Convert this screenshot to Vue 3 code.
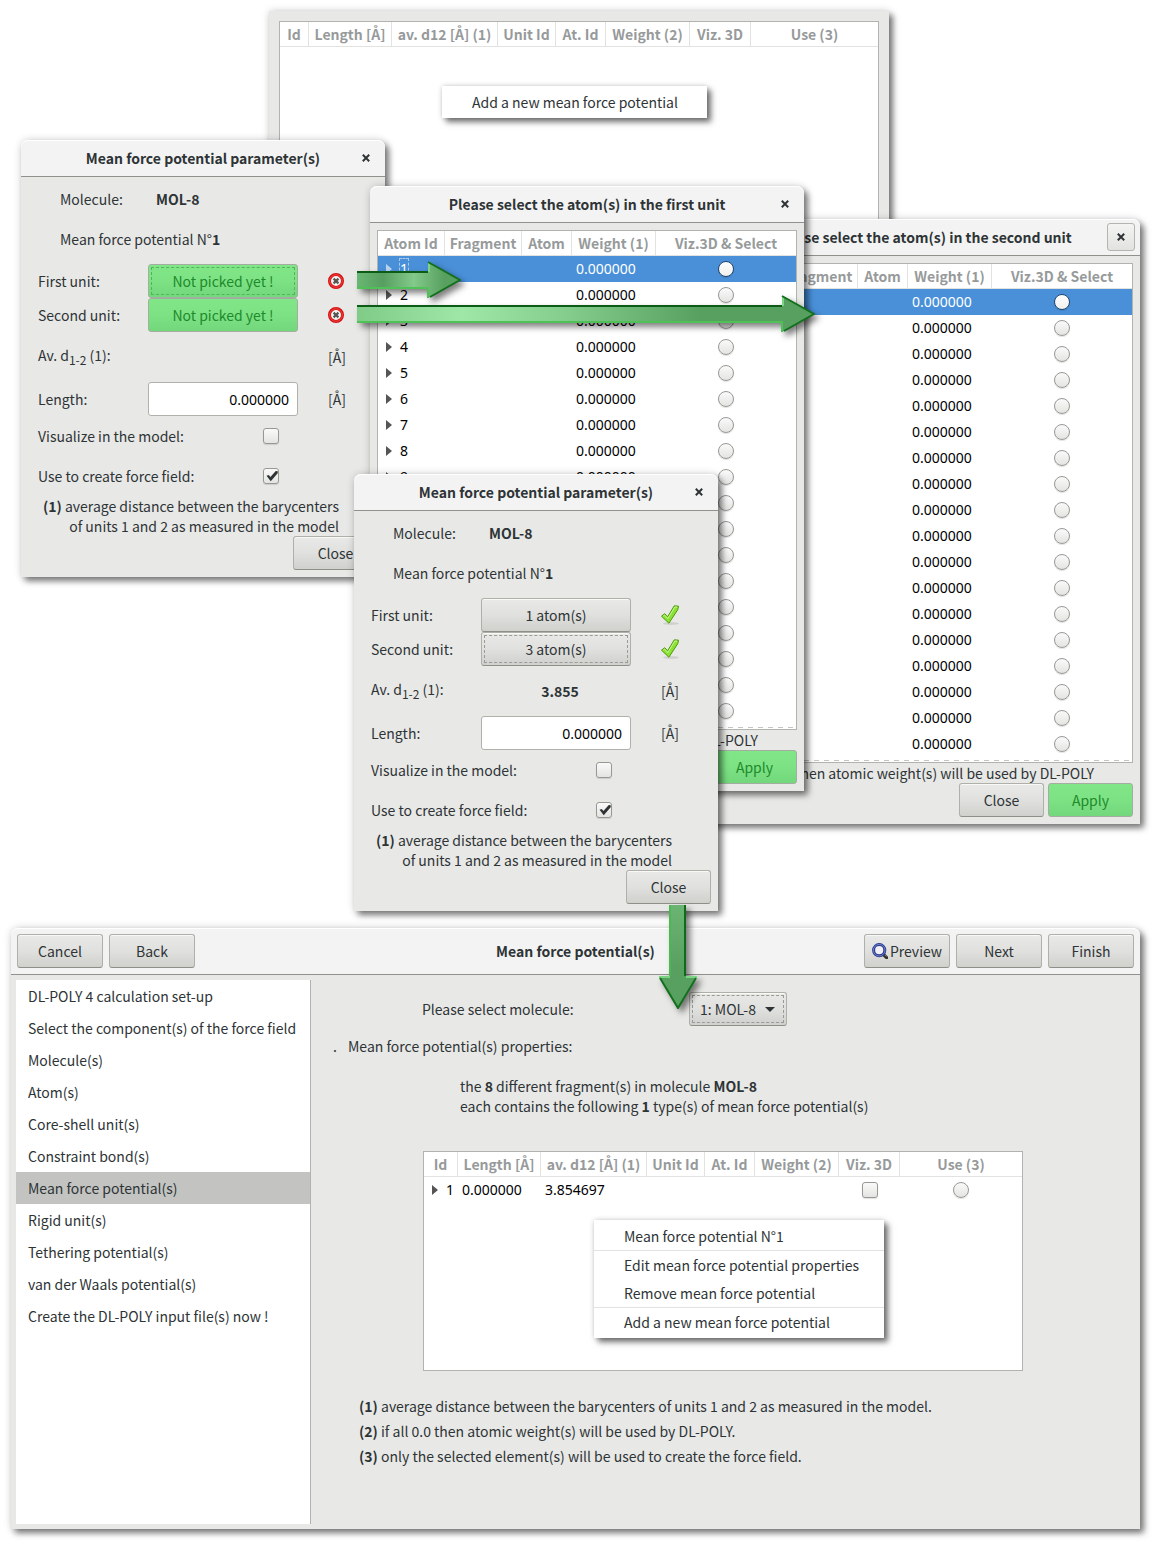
<script setup>
const paramDialogs = [
  { id: 'empty', units: ['Not picked yet !', 'Not picked yet !'], picked: false, focus: 0, distance: '' },
  { id: 'done', units: ['1 atom(s)', '3 atom(s)'], picked: true, focus: 1, distance: '3.855' },
]

const atomDialogs = [
  { id: 'second', unit: 'second', closeFramed: true },
  { id: 'first', unit: 'first', closeFramed: false },
]

const unitLabels = ['First unit:', 'Second unit:']
const atoms = Array.from({ length: 18 }, (_, i) => i + 1)
const atomColumns = ['Atom Id', 'Fragment', 'Atom', 'Weight (1)', 'Viz.3D & Select']
const potentialColumns = ['Id', 'Length [Å]', 'av. d12 [Å] (1)', 'Unit Id', 'At. Id', 'Weight (2)', 'Viz. 3D', 'Use (3)']

const steps = [
  'DL-POLY 4 calculation set-up',
  'Select the component(s) of the force field',
  'Molecule(s)',
  'Atom(s)',
  'Core-shell unit(s)',
  'Constraint bond(s)',
  'Mean force potential(s)',
  'Rigid unit(s)',
  'Tethering potential(s)',
  'van der Waals potential(s)',
  'Create the DL-POLY input file(s) now !',
]
const currentStep = 6

const notes = [
  'average distance between the barycenters of units 1 and 2 as measured in the model.',
  'if all 0.0 then atomic weight(s) will be used by DL-POLY.',
  'only the selected element(s) will be used to create the force field.',
]
</script>

<template>
  <main class="page">
    <div class="desk">
      <section class="window overview" aria-label="Mean force potentials">
        <div class="frame overview-frame">
          <table class="grid potentials">
            <colgroup>
              <col class="c-id-s"><col class="c-len"><col class="c-av"><col class="c-unit"><col class="c-at"><col class="c-weight"><col class="c-viz"><col>
            </colgroup>
            <thead>
              <tr><th v-for="c in potentialColumns" :key="c" scope="col">{{ c }}</th></tr>
            </thead>
          </table>
          <ul class="menu menu-add">
            <li><button type="button">Add a new mean force potential</button></li>
          </ul>
        </div>
      </section>

      <section v-for="d in atomDialogs" :key="d.id" class="window atoms-dialog" :class="'at-' + d.id">
        <header class="titlebar">
          <h2>Please select the atom(s) in the {{ d.unit }} unit</h2>
          <button type="button" class="x" :class="{ framed: d.closeFramed }" aria-label="Close window">
            <svg viewBox="0 0 10 10" width="10" height="10"><path d="M1.8 1.8 8.2 8.2M8.2 1.8 1.8 8.2" /></svg>
          </button>
        </header>
        <div class="atoms-body">
          <div class="frame atoms-frame">
            <table class="grid">
              <colgroup><col class="c-atomid"><col class="c-frag"><col class="c-atom"><col class="c-w"><col></colgroup>
              <thead>
                <tr><th v-for="c in atomColumns" :key="c" scope="col">{{ c }}</th></tr>
              </thead>
              <tbody>
                <tr v-for="n in atoms" :key="n" :class="{ selected: n === 1 }">
                  <td>
                    <span class="tree">
                      <button type="button" class="expander" :aria-label="'Expand atom ' + n">
                        <svg viewBox="0 0 6 10" width="6" height="10"><path d="M0 0 6 5 0 10z" /></svg>
                      </button>
                      <span :class="{ cursor: n === 1 }">{{ n }}</span>
                    </span>
                  </td>
                  <td></td>
                  <td></td>
                  <td>0.000000</td>
                  <td class="mid"><input type="radio" class="radio" :aria-label="'Select atom ' + n"></td>
                </tr>
              </tbody>
            </table>
          </div>
          <p class="atoms-note"><b>(1)</b> if all 0.0 then atomic weight(s) will be used by DL-POLY</p>
          <div class="actions">
            <button type="button" class="btn">Close</button>
            <button type="button" class="btn green">Apply</button>
          </div>
        </div>
      </section>

      <section v-for="d in paramDialogs" :key="d.id" class="window param-dialog" :class="'at-' + d.id">
        <header class="titlebar">
          <h2>Mean force potential parameter(s)</h2>
          <button type="button" class="x" aria-label="Close window">
            <svg viewBox="0 0 10 10" width="10" height="10"><path d="M1.8 1.8 8.2 8.2M8.2 1.8 1.8 8.2" /></svg>
          </button>
        </header>
        <div class="param-body">
          <p class="param-head"><span class="mol">Molecule:</span><b>MOL-8</b></p>
          <p class="param-head">Mean force potential N°<b>1</b></p>
          <div class="units">
            <div v-for="(u, i) in d.units" :key="i" class="row unit">
              <span class="lab">{{ unitLabels[i] }}</span>
              <button type="button" class="btn" :class="{ green: !d.picked, focused: d.focus === i }">{{ u }}</button>
              <svg v-if="d.picked" class="state" viewBox="0 0 22 22" width="22" height="22" aria-label="Picked">
                <ellipse cx="12" cy="19.500" rx="8" ry="1.500" fill="#000" opacity=".1" />
                <path d="M2.500 12.200 5.700 9.700 8.600 12.800 15.300 1.800 19.500 2.200 18.800 5.600 9.900 19.200z" fill="#8ae234" stroke="#4e9a06" stroke-linejoin="round" />
                <path d="M4.200 12.200 5.600 11.100 8.700 14.600 15.900 3 18.200 3.200" fill="none" stroke="#c9f59b" />
              </svg>
              <svg v-else class="state bad" viewBox="0 0 16 16" width="16" height="16" aria-label="Not picked">
                <circle cx="8" cy="8" r="6.500" fill="#f4f4f2" stroke="#d40f0f" stroke-width="3" />
                <circle cx="8" cy="8" r="6.300" fill="none" stroke="#f04a4a" />
                <path d="M5.600 5.600 10.400 10.400M10.400 5.600 5.600 10.400" stroke="#555753" stroke-width="2.200" />
              </svg>
            </div>
          </div>
          <div class="row av">
            <span class="lab">Av. d<sub>1-2</sub> (1):</span>
            <b class="distance">{{ d.distance }}</b>
            <span class="ang">[Å]</span>
          </div>
          <div class="row length">
            <label class="lab" :for="'len-' + d.id">Length:</label>
            <input :id="'len-' + d.id" type="text" class="entry" value="0.000000">
            <span class="ang">[Å]</span>
          </div>
          <div class="row tick">
            <label :for="'vis-' + d.id">Visualize in the model:</label>
            <input :id="'vis-' + d.id" type="checkbox" class="check">
          </div>
          <div class="row tick">
            <label :for="'use-' + d.id">Use to create force field:</label>
            <input :id="'use-' + d.id" type="checkbox" class="check" checked>
          </div>
          <p class="param-note"><b>(1)</b> average distance between the barycenters<br>of units 1 and 2 as measured in the model</p>
          <div class="actions"><button type="button" class="btn">Close</button></div>
        </div>
      </section>
    </div>

    <section class="window wizard">
      <header class="wizard-bar">
        <div class="group">
          <button type="button" class="btn">Cancel</button>
          <button type="button" class="btn">Back</button>
        </div>
        <h1>Mean force potential(s)</h1>
        <div class="group end">
          <button type="button" class="btn preview">
            <svg viewBox="0 0 16 16" width="16" height="16">
              <path d="M12 12 14.600 14.600" stroke="#2e2e2e" stroke-width="3.200" stroke-linecap="round" />
              <path d="M12.800 12 14.400 13.600" stroke="#a08a5a" />
              <circle cx="7.200" cy="7.200" r="5.600" fill="#f0f0f4" stroke="#2b3a8c" stroke-width="3" />
              <circle cx="7.200" cy="7.200" r="5.800" fill="none" stroke="#6f83d0" />
            </svg>Preview
          </button>
          <button type="button" class="btn">Next</button>
          <button type="button" class="btn">Finish</button>
        </div>
      </header>
      <div class="wizard-body">
        <nav class="steps" aria-label="Steps">
          <a v-for="(s, i) in steps" :key="s" href="#" :class="{ current: i === currentStep }">{{ s }}</a>
        </nav>
        <div class="content">
          <div class="pick">
            <label for="molecule">Please select molecule:</label>
            <span class="combo">
              <select id="molecule" class="btn focused"><option>1: MOL-8</option></select>
              <svg viewBox="0 0 10 5" width="10" height="5"><path d="M0 0H10L5 5z" fill="#2e3436" /></svg>
            </span>
          </div>
          <p class="props"><span class="dot">.</span>Mean force potential(s) properties:</p>
          <p class="summary">the <b>8</b> different fragment(s) in molecule <b>MOL-8</b><br>each contains the following <b>1</b> type(s) of mean force potential(s)</p>
          <div class="frame result-frame">
            <table class="grid potentials">
              <colgroup>
                <col class="c-id"><col class="c-len"><col class="c-av"><col class="c-unit"><col class="c-at"><col class="c-weight"><col class="c-viz"><col>
              </colgroup>
              <thead>
                <tr><th v-for="c in potentialColumns" :key="c" scope="col">{{ c }}</th></tr>
              </thead>
              <tbody>
                <tr>
                  <td>
                    <span class="tree">
                      <button type="button" class="expander" aria-label="Expand potential 1">
                        <svg viewBox="0 0 6 10" width="6" height="10"><path d="M0 0 6 5 0 10z" /></svg>
                      </button>
                      <span>1</span>
                    </span>
                  </td>
                  <td>0.000000</td>
                  <td>3.854697</td>
                  <td></td>
                  <td></td>
                  <td></td>
                  <td class="mid"><input type="checkbox" class="check" aria-label="Visualize potential 1"></td>
                  <td class="mid"><input type="radio" class="radio" aria-label="Use potential 1"></td>
                </tr>
              </tbody>
            </table>
            <ul class="menu menu-edit">
              <li><button type="button">Mean force potential N°1</button></li>
              <li class="sep"><button type="button">Edit mean force potential properties</button></li>
              <li><button type="button">Remove mean force potential</button></li>
              <li class="sep"><button type="button">Add a new mean force potential</button></li>
            </ul>
          </div>
          <div class="notes">
            <p v-for="(n, i) in notes" :key="i"><b>({{ i + 1 }})</b> {{ n }}</p>
          </div>
        </div>
      </div>
    </section>

    <svg class="arrow to-first" viewBox="0 0 104 38" width="104" height="38" aria-hidden="true">
      <defs>
        <linearGradient id="g1"><stop offset="0" stop-color="#69b773" /><stop offset=".25" stop-color="#579f60" /><stop offset=".55" stop-color="#82c98a" /><stop offset=".85" stop-color="#58a060" /></linearGradient>
      </defs>
      <path d="M0 11H71V1L103 19 71 37V27H0z" fill="url(#g1)" />
      <path d="M71 37V27H0" fill="none" stroke="#4fc257" stroke-width="2" />
      <path d="M0 11H71" stroke="#0d5c16" stroke-width="2" />
      <path d="M72 2V11" stroke="#7bd583" stroke-width="2" />
      <path d="M71 1 103 19 73 36" fill="none" stroke="#12701c" stroke-width="2" />
    </svg>
    <svg class="arrow to-second" viewBox="0 0 458 38" width="458" height="38" aria-hidden="true">
      <defs>
        <linearGradient id="g2"><stop offset="0" stop-color="#80cb88" /><stop offset=".23" stop-color="#9fe7a7" /><stop offset=".45" stop-color="#86ce8e" /><stop offset=".75" stop-color="#58a060" /></linearGradient>
      </defs>
      <path d="M0 11H425V1L457 19 425 37V27H0z" fill="url(#g2)" />
      <path d="M425 37V27H0" fill="none" stroke="#4fc257" stroke-width="2" />
      <path d="M0 11H425" stroke="#0d5c16" stroke-width="2" />
      <path d="M426 2V11" stroke="#7bd583" stroke-width="2" />
      <path d="M425 1 457 19 427 36" fill="none" stroke="#12701c" stroke-width="2" />
    </svg>
    <svg class="arrow to-wizard" viewBox="0 0 38 104" width="38" height="104" aria-hidden="true">
      <defs>
        <linearGradient id="g3" x2="0" y2="1"><stop offset="0" stop-color="#6bb573" /><stop offset=".6" stop-color="#58a060" /></linearGradient>
      </defs>
      <path d="M11 0V71H0L19 104 38 71H27V0z" fill="url(#g3)" />
      <path d="M11 0V71" stroke="#4bb854" stroke-width="2" />
      <path d="M0 72H11M27 72H38" stroke="#7ad583" stroke-width="2" />
      <path d="M26 0V71" stroke="#0f6a1a" stroke-width="2" />
      <path d="M1 73 19 103 37 73" fill="none" stroke="#12701c" stroke-width="2" />
    </svg>
  </main>
</template>

<style>
body { background: #fff; }
</style>

<style scoped>
*, *::before { box-sizing: border-box; }
h1, h2, p, ul { margin: 0; padding: 0; }
button, input, select { font: inherit; color: inherit; margin: 0; }

.page {
  position: relative;
  padding-bottom: 19px;
  font-family: "Noto Sans CJK SC", "Noto Sans", sans-serif;
  font-size: 14px;
  line-height: 20px;
  color: #2e3436;
}
.desk { position: relative; height: 928px; }

/* windows */
.window {
  background: #e8e8e6;
  box-shadow: 4px 4px 6px rgba(0, 0, 0, .5), 0 0 8px rgba(0, 0, 0, .16);
}
.overview { position: absolute; left: 269px; top: 11px; width: 620px; padding: 10px; }
.param-dialog, .atoms-dialog, .wizard { border-radius: 7px 7px 0 0; }
.param-dialog { position: absolute; width: 364px; }
.atoms-dialog { position: absolute; width: 434px; }
.at-empty { left: 21px; top: 140px; z-index: 1; }
.at-second { left: 706px; top: 219px; z-index: 2; }
.at-first { left: 370px; top: 186px; z-index: 3; }
.at-done { left: 354px; top: 474px; z-index: 4; }
.wizard { margin: 0 19px 0 11px; }

.titlebar {
  display: flex;
  align-items: center;
  height: 37px;
  padding: 0 5px 0 33px;
  background: #f3f3f3;
  border-bottom: 1px solid #8f918b;
  box-shadow: inset 0 1px #fff;
  border-radius: 7px 7px 0 0;
}
.titlebar h2 { flex: 1; text-align: center; }
h1, h2 { font-size: 14px; line-height: 20px; font-weight: 700; }
.x {
  display: grid;
  place-items: center;
  width: 28px;
  height: 28px;
  padding: 0;
  border: 1px solid transparent;
  border-radius: 3px;
  background: none;
}
.x path { stroke: #2e3436; stroke-width: 2; }
.x.framed { border-color: #b4b4b0; background: linear-gradient(#f4f4f3, #e2e2e0); }

/* shared controls */
.btn {
  height: 34px;
  padding: 0;
  border: 1px solid #b0b0ab;
  border-bottom-color: #8f8f8a;
  border-radius: 3px;
  background: linear-gradient(#e9e9e7, #e0e0de 50%, #d0d0cd);
  box-shadow: inset 0 1px rgba(255, 255, 255, .7);
  text-align: center;
  line-height: 20px;
}
.btn.green {
  border-color: #a3ada0;
  background: linear-gradient(#80e688, #7ce284 50%, #73d77b);
  box-shadow: none;
  color: #208a2b;
}
.focused { outline: 1px dashed #9a9a96; outline-offset: -4px; }
.green.focused { outline-color: #4fb659; }
.check, .radio {
  appearance: none;
  display: block;
  width: 16px;
  height: 16px;
  border: 1px solid #989893;
  border-radius: 3px;
  background: linear-gradient(#fafafa, #e4e4e2);
  box-shadow: 0 1px 1px rgba(0, 0, 0, .12);
}
.radio { border-radius: 50%; }
.check:checked::before {
  content: "";
  display: block;
  width: 14px;
  height: 14px;
  background: #2e3436;
  clip-path: polygon(18% 48%, 34% 42%, 46% 58%, 84% 14%, 98% 16%, 98% 30%, 48% 88%);
}
.frame { position: relative; background: #fff; border: 1px solid #b1b4ae; }

/* tables */
.grid { width: 100%; table-layout: fixed; border-collapse: separate; border-spacing: 0; }
.grid th {
  height: 25px;
  padding: 0;
  border-right: 1px solid #e2e2e0;
  border-bottom: 1px solid #e2e2e0;
  color: #979a9b;
  font-weight: 700;
  line-height: 20px;
  white-space: nowrap;
  text-align: center;
}
.grid th:last-child { border-right: 0; }
.grid td {
  height: 26px;
  padding: 0 0 0 4px;
  color: #000;
  font-family: "Noto Sans", sans-serif;
  line-height: 20px;
}
.grid td.mid { padding: 0; }
.mid input { margin: 0 auto; }
.c-id-s { width: 29px; }
.c-id { width: 34px; }
.c-len { width: 83px; }
.c-av { width: 106px; }
.c-unit { width: 58px; }
.c-at { width: 50px; }
.c-weight { width: 84px; }
.c-viz { width: 61px; }
.c-atomid { width: 67px; }
.c-frag { width: 77px; }
.c-atom { width: 50px; }
.c-w { width: 84px; }
.tree { display: flex; align-items: center; gap: 8px; padding-left: 4px; }
.expander { display: flex; padding: 0; border: 0; background: none; }
.expander path { fill: #555; }
.selected td { background: #4a90d9; color: #fff; }
.selected .expander path { fill: #b9d3f0; }
.selected .radio { border-color: #24486e; background: linear-gradient(#fff, #f0f0ef); }
.cursor { outline: 1px dashed #a9c9ec; }

/* menus */
.menu {
  position: absolute;
  padding: 2px 0;
  list-style: none;
  background: #fff;
  box-shadow: 4px 4px 6px rgba(0, 0, 0, .55), 0 0 5px rgba(0, 0, 0, .18);
}
.menu button {
  display: block;
  width: 100%;
  height: 28px;
  padding: 0 30px;
  border: 0;
  background: none;
  text-align: left;
  white-space: nowrap;
}
.sep { border-top: 1px solid #e2e2e0; }
.menu-add { left: 162px; top: 64px; width: 265px; }
.menu-edit { left: 170px; top: 68px; width: 290px; }

.overview-frame { height: 400px; }

/* atom selection */
.atoms-body { padding: 7px; }
.atoms-frame { height: 500px; }
.atoms-frame::before {
  content: "";
  position: absolute;
  left: 0;
  right: 0;
  bottom: 1px;
  height: 1px;
  background: repeating-linear-gradient(90deg, #c4c4c4 0 5px, #fff 5px 10px);
}
.atoms-note { padding-right: 39px; text-align: right; }
.actions { display: flex; justify-content: flex-end; gap: 4px; }
.actions .btn { width: 85px; }

/* potential parameters */
.param-body { padding: 2px 7px 7px 17px; }
.param-head { padding: 10px 0 10px 22px; }
.mol { display: inline-block; width: 96px; }
.row { display: flex; align-items: center; }
.units { padding-top: 5px; }
.lab { width: 110px; }
.unit .btn { width: 150px; }
.state { margin-left: 28px; }
.state.bad { margin-left: 30px; }
.av { height: 50px; }
.av .lab { padding-bottom: 4px; }
.lab sub { font-size: 12px; line-height: 1px; }
.distance { width: 158px; text-align: center; }
.ang { margin-left: 30px; }
.av .ang { margin-left: 22px; }
.entry {
  width: 150px;
  height: 34px;
  padding: 0 8px;
  border: 1px solid #b1b1ac;
  border-radius: 3px;
  background: #fff;
  color: #000;
  font-family: "Noto Sans", sans-serif;
  text-align: right;
}
.tick { height: 40px; }
.tick label { width: 225px; }
.param-note { width: 301px; text-align: right; white-space: nowrap; }

/* wizard */
.wizard-bar {
  display: grid;
  grid-template-columns: 1fr auto 1fr;
  align-items: center;
  height: 47px;
  padding: 0 6px;
  background: #f3f3f3;
  border-bottom: 1px solid #8f918b;
  border-radius: 7px 7px 0 0;
  box-shadow: inset 0 1px #fff;
}
.group { display: flex; gap: 6px; }
.end { justify-content: flex-end; }
.group .btn { width: 86px; }
.preview { display: flex; align-items: center; justify-content: center; gap: 2px; }
.wizard-body { display: flex; }
.steps {
  display: flex;
  flex-direction: column;
  width: 295px;
  margin: 5px 0 5px 5px;
  background: #fff;
  border-right: 1px solid #b1b4ae;
}
.steps a {
  padding: 6px 0 6px 12px;
  color: inherit;
  text-decoration: none;
  white-space: nowrap;
}
.steps .current { background: #c3c4c2; }
.content { flex: 1; padding: 17px 0 60px; }
.pick { display: flex; align-items: center; padding-left: 111px; }
.pick label { width: 267px; }
.combo { position: relative; display: flex; align-items: center; }
.combo select { appearance: none; width: 98px; padding: 0 26px 0 10px; text-align: left; }
.combo svg { position: absolute; right: 12px; pointer-events: none; }
.props { padding: 10px 0 0 22px; }
.dot { display: inline-block; width: 15px; }
.summary { padding: 20px 0 0 149px; }
.result-frame { width: 600px; height: 220px; margin: 35px 0 0 112px; }
.notes { padding: 23px 0 0 48px; line-height: 25px; }

/* arrows */
.arrow { position: absolute; z-index: 5; filter: drop-shadow(4px 4px 3px rgba(0, 0, 0, .5)); }
.to-first { left: 357px; top: 261px; }
.to-second { left: 357px; top: 295px; }
.to-wizard { left: 659px; top: 905px; }
</style>
